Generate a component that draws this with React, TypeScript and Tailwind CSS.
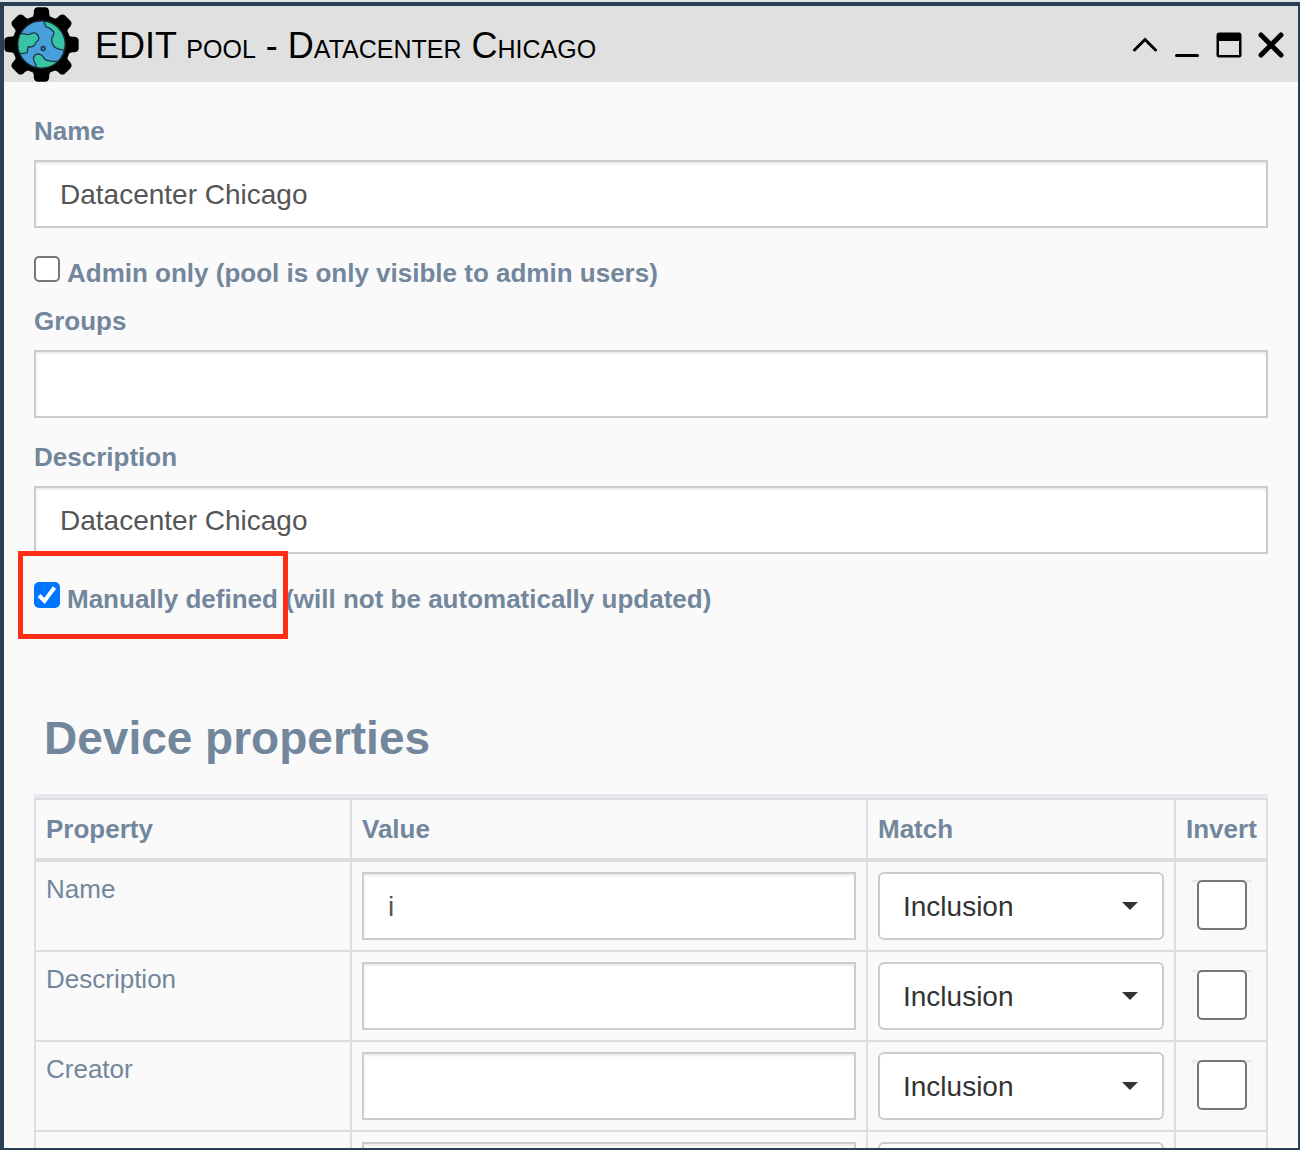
import { useId, useState } from "react";

const inputClass =
  "block h-[68px] w-full border-2 border-[#cccccc] bg-white px-6 pt-[2px] text-[28px] text-[#555555] shadow-[inset_0_2px_2px_rgba(0,0,0,0.075)] outline-none";

function GearGlobe() {
  return (
    <svg viewBox="0 0 224 224" className="h-[75px] w-[75px] shrink-0" aria-hidden="true">
      <defs>
        <clipPath id="globe">
          <circle cx="112" cy="112" r="70" />
        </clipPath>
      </defs>
      <circle cx="112" cy="112" r="87" />
      {[0, 45, 90, 135, 180, 225, 270, 315].map((angle) => (
        <path
          key={angle}
          transform={`rotate(${angle} 112 112)`}
          d="M76 38 Q88 31 89 20 V13 Q91 1 101 1 H123 Q133 1 135 13 V20 Q136 31 148 38 V60 H76 Z"
        />
      ))}
      <circle cx="112" cy="112" r="70" fill="#479fdc" />
      <g clipPath="url(#globe)" fill="#38c3a5" stroke="#20384c" strokeWidth="4" strokeLinejoin="round">
        <path d="M36 84 L48 80 Q60 79 68 82 Q77 84 84 78 Q94 75 99 82 Q107 90 102 100 Q94 104 92 113 Q87 121 72 119 Q70 130 69 136 Q60 139 36 139 Z" />
        <path d="M118 36 Q121 53 125 58 Q139 63 148 74 Q151 81 143 91 Q140 106 150 119 Q160 128 190 130 V36 Z" />
        <path d="M97 188 Q97 176 93 168 Q86 158 89 148 Q96 137 109 142 Q117 147 121 155 Q131 164 170 162 V190 Z" />
      </g>
      <circle cx="117" cy="124" r="6" fill="#3d80ad" stroke="#20384c" strokeWidth="4" />
      <circle cx="112" cy="112" r="71" fill="none" stroke="#1d2730" strokeWidth="4" />
    </svg>
  );
}

function WindowButtons() {
  return (
    <div className="flex items-center gap-[18px] pt-[2px] pr-[15px]">
      <button type="button" aria-label="Collapse">
        <svg viewBox="0 0 24 24" className="block size-6" fill="none" stroke="#000" strokeWidth="3" strokeLinecap="round">
          <path d="M1.500 17 L12 6.500 L22.500 17" />
        </svg>
      </button>
      <button type="button" aria-label="Minimize">
        <svg viewBox="0 0 24 24" className="block size-6">
          <rect x="0" y="21" width="24" height="3" rx="1.5" />
        </svg>
      </button>
      <button type="button" aria-label="Maximize">
        <svg viewBox="0 0 24 24" className="block size-6 overflow-visible">
          <path fillRule="evenodd" d="M2.500 -0.500 H22 Q24.500 -0.500 24.500 2.500 V22 Q24.500 24.500 22 24.500 H2.500 Q-0.500 24.500 -0.500 22 V2.500 Q-0.500 -0.500 2.500 -0.500 Z M2 8 V21.500 Q2 22 2.500 22 H21.500 Q22 22 22 21.500 V8 Z" />
        </svg>
      </button>
      <button type="button" aria-label="Close">
        <svg viewBox="0 0 24 24" className="block size-6 overflow-visible" stroke="#000" strokeWidth="5" strokeLinecap="round">
          <path d="M2 2 L22 22 M22 2 L2 22" />
        </svg>
      </button>
    </div>
  );
}

function TextField({ label, initial }: { label: string; initial: string }) {
  const id = useId();
  return (
    <div>
      <label htmlFor={id} className="mb-[10px] block text-[26px] leading-[38px] font-bold">
        {label}
      </label>
      <input id={id} type="text" defaultValue={initial} className={inputClass} />
    </div>
  );
}

function CheckField({ label, initial, highlighted }: { label: string; initial: boolean; highlighted?: boolean }) {
  const id = useId();
  const [checked, setChecked] = useState(initial);
  return (
    <div className="relative mt-[26px] mb-[10px] flex items-start gap-[7px]">
      <span className="relative mt-[2px] block size-[26px] shrink-0">
        <input
          id={id}
          type="checkbox"
          checked={checked}
          onChange={(e) => setChecked(e.target.checked)}
          className="block size-[26px] appearance-none rounded-[5px] border-2 border-[#767676] bg-white checked:border-[#0075ff] checked:bg-[#0075ff]"
        />
        {checked && (
          <svg viewBox="0 0 26 26" className="pointer-events-none absolute inset-0" fill="none" stroke="#fff" strokeWidth="4">
            <path d="M5 13.500 L10.500 19 L20.500 5.500" />
          </svg>
        )}
      </span>
      <label htmlFor={id} className="text-[26px] leading-[38px] font-bold">
        {label}
      </label>
      {highlighted && (
        <span className="pointer-events-none absolute -top-[29px] -left-[16px] h-[88px] w-[270px] border-[5px] border-[#ff2d16]" />
      )}
    </div>
  );
}

const headCell = "border-r-2 border-b-4 border-[#dddddd] p-[10px] text-left text-[26px] leading-[38px] font-bold";
const bodyCell = "border-r-2 border-b-2 border-[#dddddd] p-[10px] align-top";

function PropertyRow({ name, value }: { name: string; value: string }) {
  const label = name || "Property";
  return (
    <tr className="odd:bg-[#f9f9f9]">
      <td className={bodyCell}>
        <span className="block text-[26px] leading-[34px]">{name}</span>
      </td>
      <td className={bodyCell}>
        <input type="text" aria-label={`${label} value`} defaultValue={value} className={inputClass} />
      </td>
      <td className={bodyCell}>
        <div className="relative">
          <select
            aria-label={`${label} match`}
            className="block h-[68px] w-full appearance-none rounded-md border-2 border-[#cccccc] bg-white px-[23px] pt-[2px] text-[28px] text-[#333333] outline-none"
          >
            <option>Inclusion</option>
          </select>
          <svg viewBox="0 0 16 8" className="pointer-events-none absolute top-[30px] right-[26px] h-2 w-4" fill="#333333">
            <path d="M0 0 H16 L8 8 Z" />
          </svg>
        </div>
      </td>
      <td className={bodyCell}>
        <div className="mt-2 ml-[6px] w-[60px] shadow-[inset_0_2px_2px_rgba(0,0,0,0.075)]">
          <input
            type="checkbox"
            aria-label={`${label} invert`}
            className="mx-auto block size-[50px] appearance-none rounded-[5px] border-2 border-[#767676] bg-white checked:bg-[#0075ff]"
          />
        </div>
      </td>
    </tr>
  );
}

export default function App() {
  return (
    <div className="flex h-screen flex-col bg-[#dfe4e5] pt-[2px] font-['Liberation_Sans',Arial,sans-serif] text-[#73879c]">
      <div className="flex min-h-0 grow flex-col overflow-hidden border-t-4 border-r-2 border-b-2 border-l-4 border-[#2a3f54] bg-[#fafafa]">
        <header className="flex h-[76px] shrink-0 items-center bg-[#e0e0e0] text-black">
          <GearGlobe />
          <h1 className="ml-4 grow pt-[3px] text-[36px] leading-[40px] [font-variant-caps:small-caps]">
            EDIT pool - Datacenter Chicago
          </h1>
          <WindowButtons />
        </header>
        <main className="min-h-0 grow overflow-hidden px-[30px] pt-[30px]">
          <TextField label="Name" initial="Datacenter Chicago" />
          <CheckField label="Admin only (pool is only visible to admin users)" initial={false} />
          <TextField label="Groups" initial="" />
          <div className="mt-5">
            <TextField label="Description" initial="Datacenter Chicago" />
          </div>
          <CheckField label="Manually defined (will not be automatically updated)" initial highlighted />
          <h2 className="mt-[90px] mb-[26px] pl-[10px] text-[46px] leading-[60px] font-bold">Device properties</h2>
          <div className="border-t-4 border-[#e6e9ed]">
            <table className="w-full table-fixed border-separate border-spacing-0 border-t-2 border-l-2 border-[#dddddd]">
              <colgroup>
                <col className="w-[316px]" />
                <col />
                <col className="w-[308px]" />
                <col className="w-[92px]" />
              </colgroup>
              <thead>
                <tr>
                  <th className={headCell}>Property</th>
                  <th className={headCell}>Value</th>
                  <th className={headCell}>Match</th>
                  <th className={headCell}>Invert</th>
                </tr>
              </thead>
              <tbody>
                <PropertyRow name="Name" value="i" />
                <PropertyRow name="Description" value="" />
                <PropertyRow name="Creator" value="" />
                <PropertyRow name="" value="" />
              </tbody>
            </table>
          </div>
        </main>
      </div>
    </div>
  );
}
